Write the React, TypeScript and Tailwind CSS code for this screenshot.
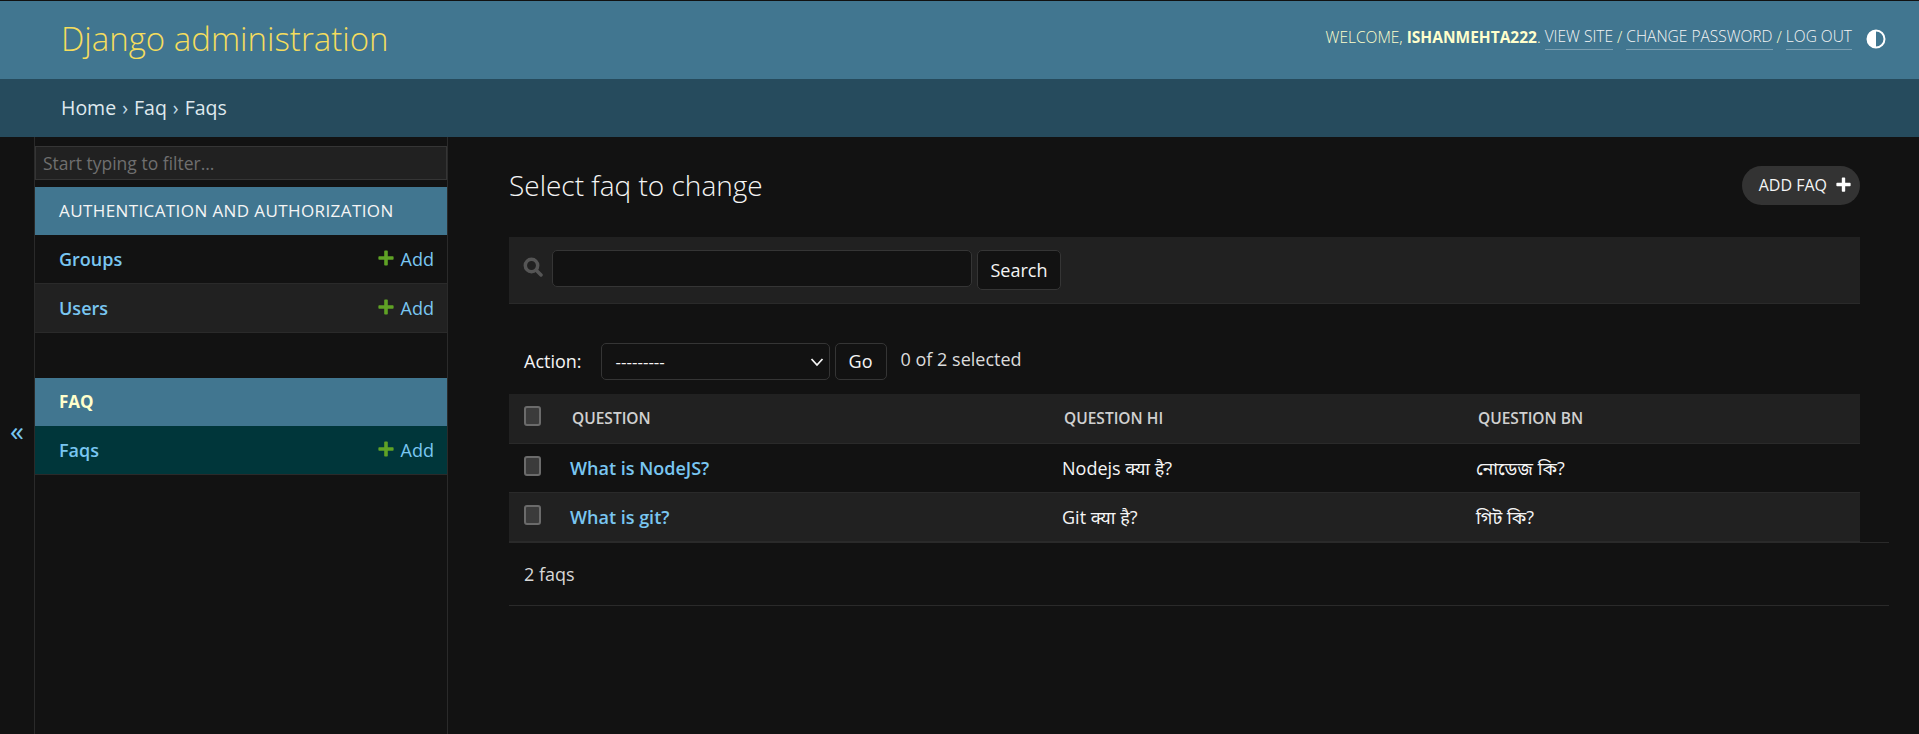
const font = { fontFamily: '"Open Sans", "Noto Sans", "Noto Sans Devanagari", "Noto Sans Bengali", "Liberation Sans", sans-serif' };

function Plus({ className }: { className: string }) {
  return (
    <svg viewBox="0 0 16 16" className={className} fill="currentColor">
      <path d="M6.2 1.2a.8.8 0 0 1 .8-.8h2a.8.8 0 0 1 .8.8v5h5a.8.8 0 0 1 .8.8v2a.8.8 0 0 1-.8.8h-5v5a.8.8 0 0 1-.8.8H7a.8.8 0 0 1-.8-.8v-5h-5a.8.8 0 0 1-.8-.8V7a.8.8 0 0 1 .8-.8h5z" />
    </svg>
  );
}

function SideRow({ name, bg }: { name: string; bg: string }) {
  return (
    <div className={`flex h-[49px] items-center justify-between border-b border-[#2a2a2a] pl-6 pr-[13px] text-[18px] ${bg}`}>
      <span className="font-semibold text-[#79c6f1]">{name}</span>
      <span className="flex items-center gap-[7px] text-[#79c6f1]">
        <Plus className="mb-[3px] h-[16px] w-[16px] text-[#5fa225]" />
        Add
      </span>
    </div>
  );
}

function Check() {
  return <span className="block h-[20px] w-[17px] rounded-[3px] border-2 border-[#6b6b6b] bg-[#3b3b3b]" />;
}

function Row({ q, hi, bn, bg }: { q: string; hi: string; bn: string; bg: string }) {
  return (
    <div className={`flex h-[49px] items-center border-b border-[#2a2a2a] text-[18px] ${bg}`}>
      <div className="w-[61px] pb-[4px] pl-[15px]"><Check /></div>
      <div className="w-[492px] font-semibold text-[#79c6f1]">{q}</div>
      <div className="w-[414px] text-[#f5f5f5]">{hi}</div>
      <div className="text-[#f5f5f5]">{bn}</div>
    </div>
  );
}

export default function App() {
  return (
    <div className="flex h-[734px] flex-col overflow-hidden bg-[#121212]" style={font}>
      <header className="flex h-[79px] shrink-0 items-center justify-between border-t border-[#111] bg-[#417690] pl-[61px] pr-[33px]">
        <h1 className="pb-[2px] text-[33px] font-light text-[#f5dd5d]">Django administration</h1>
        <div className="flex items-center pb-[5px] text-[15.5px] font-light uppercase text-[#ffffcc]">
          <span>Welcome, <strong className="font-bold">ishanmehta222</strong>.&nbsp;</span>
          <a className="border-b border-[#7a9fb2] text-[#f5f5f5]">View site</a>
          <span>&nbsp;/&nbsp;</span>
          <a className="border-b border-[#7a9fb2] text-[#f5f5f5]">Change password</a>
          <span>&nbsp;/&nbsp;</span>
          <a className="border-b border-[#7a9fb2] text-[#f5f5f5]">Log out</a>
          <svg viewBox="0 0 20 20" className="ml-[14px] mt-[2px] h-[20px] w-[20px]">
            <circle cx="10" cy="10" r="8.5" fill="none" stroke="#fff" strokeWidth="2" />
            <path d="M10 1.5a8.5 8.5 0 0 0 0 17z" fill="#fff" />
          </svg>
        </div>
      </header>
      <nav className="flex h-[58px] shrink-0 items-center bg-[#264b5d] pl-[61px] text-[19.5px] text-[#dfe9ee]">
        Home <span className="mx-[6px] text-[#c4dce8]">›</span> Faq <span className="mx-[6px] text-[#c4dce8]">›</span> Faqs
      </nav>
      <div className="flex min-h-0 flex-1">
        <div className="flex w-[34px] shrink-0 items-center justify-center pb-[12px] text-[28px] leading-none text-[#79c6f1]">«</div>
        <aside className="w-[414px] shrink-0 border-x border-[#2a2a2a] pt-[9px]">
          <div className="flex h-[34px] items-center border border-[#353535] bg-[#212121] pl-[7px] text-[17.5px] text-[#6f6f6f]">Start typing to filter...</div>
          <div className="mt-[7px] flex h-[48px] items-center bg-[#417690] pl-6 text-[17px] tracking-[0.4px] text-[#f5f5f5]">AUTHENTICATION AND AUTHORIZATION</div>
          <SideRow name="Groups" bg="bg-[#121212]" />
          <SideRow name="Users" bg="bg-[#212121]" />
          <div className="mt-[45px] flex h-[48px] items-center bg-[#417690] pl-6 text-[17px] font-bold text-[#ffffcc]">FAQ</div>
          <SideRow name="Faqs" bg="bg-[#00363a]" />
        </aside>
        <main className="min-w-0 flex-1 pl-[61px] pr-[30px]">
          <div className="mr-[29px] flex h-[100px] items-center justify-between">
            <h2 className="pb-[4px] text-[28px] font-light text-[#f5f5f5]">Select faq to change</h2>
            <a className="mb-[4px] flex h-[39px] items-center gap-[9px] rounded-full bg-[#333] pl-[17px] pr-[9px] text-[16px] text-[#f5f5f5]">
              ADD FAQ <Plus className="mb-[2px] h-[15px] w-[15px] text-white" />
            </a>
          </div>
          <div className="mr-[29px] flex h-[67px] items-start border-b border-[#2a2a2a] bg-[#212121] pt-[13px]">
            <svg viewBox="0 0 20 20" className="ml-[14px] mt-[7px] h-[20px] w-[20px] text-[#555]" fill="none" stroke="currentColor" strokeWidth="3.5" strokeLinecap="round">
              <circle cx="8.5" cy="8.5" r="6.2" />
              <path d="M13.5 13.5l4.5 4.5" />
            </svg>
            <div className="ml-[9px] h-[37px] w-[420px] rounded-[5px] border border-[#353535] bg-[#121212]" />
            <button className="ml-[5px] h-[40px] w-[84px] rounded-[5px] border border-[#353535] bg-[#121212] text-[18px] text-[#f5f5f5]">Search</button>
          </div>
          <div className="mr-[29px] mt-[39px] flex h-[51px] items-start text-[18px] text-[#f5f5f5]">
            <span className="ml-[15px] mt-[5px]">Action:</span>
            <div className="ml-[19px] flex h-[37px] w-[229px] items-center justify-between rounded-[5px] border border-[#353535] bg-[#121212] pl-[14px] pr-[4px] text-[17px]">
              <span>---------</span>
              <svg viewBox="0 0 16 16" className="h-[16px] w-[16px]" fill="none" stroke="#f5f5f5" strokeWidth="1.8"><path d="M2.5 5l5.5 6 5.500-6" /></svg>
            </div>
            <button className="ml-[5px] h-[37px] w-[52px] rounded-[5px] border border-[#353535] bg-[#121212]">Go</button>
            <span className="ml-[14px] mt-[3px] text-[#dcdcdc]">0 of 2 selected</span>
          </div>
          <div className="mr-[29px]">
            <div className="flex h-[50px] items-center border-b border-[#2a2a2a] bg-[#212121] text-[15.5px] font-semibold text-[#d0d0d0]">
              <div className="w-[63px] pb-[6px] pl-[15px]"><Check /></div>
              <div className="w-[492px]">QUESTION</div>
              <div className="w-[459px]">QUESTION HI</div>
              <div className="-ml-[45px]">QUESTION BN</div>
            </div>
            <Row q="What is NodeJS?" hi="Nodejs क्या है?" bn="নোডেজ কি?" bg="bg-[#121212]" />
            <Row q="What is git?" hi="Git क्या है?" bn="গিট কি?" bg="bg-[#212121]" />
          </div>
          <div className="flex h-[64px] items-center border-y border-[#2a2a2a] pl-[15px] text-[18px] text-[#d8d8d8]">2 faqs</div>
        </main>
      </div>
    </div>
  );
}
